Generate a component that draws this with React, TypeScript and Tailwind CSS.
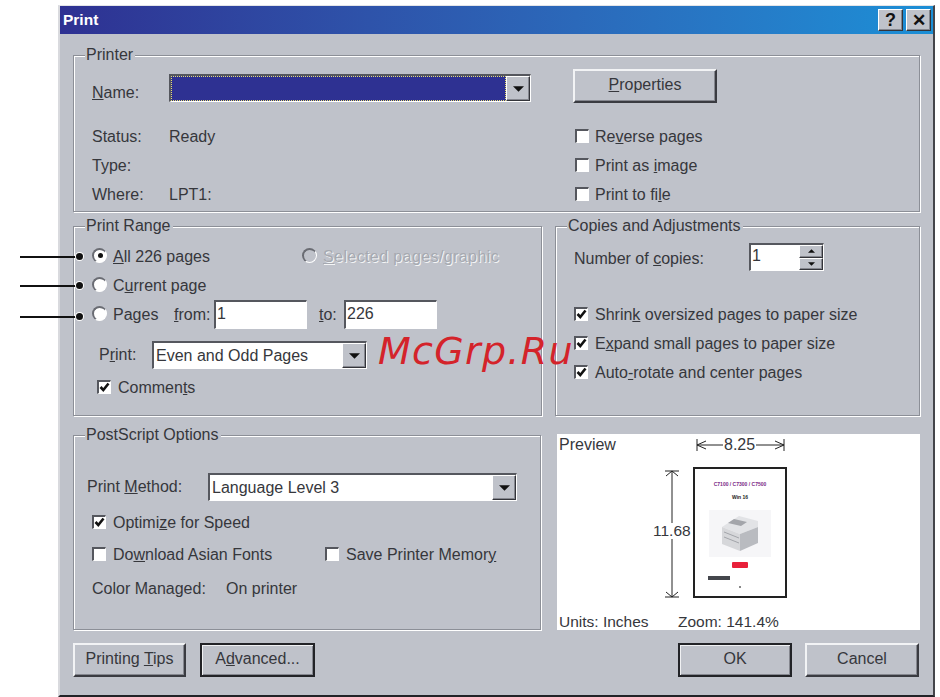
import React from "react";

const sunken = "border-t-2 border-l-2 border-t-[#55575e] border-l-[#55575e] border-r border-b border-r-white border-b-white";

function Group({ title, className, labelLeft = "left-[11px]", children }: { title: string; className: string; labelLeft?: string; children: React.ReactNode }) {
  return (
    <div className={`relative border border-[#8c8f97] shadow-[inset_1px_1px_0_#fff,1px_1px_0_#fff] ${className}`}>
      <span className={`absolute -top-[11px] ${labelLeft} bg-[#bfc2ca] pl-px pr-[2px] leading-[20px]`}>{title}</span>
      {children}
    </div>
  );
}

function Check({ checked = false, label, className = "" }: { checked?: boolean; label: React.ReactNode; className?: string }) {
  return (
    <div className={`flex items-center h-[29px] ${className}`}>
      <span className={`w-[14px] h-[14px] -mt-[2px] shrink-0 flex items-center justify-center bg-white ${sunken}`}>
        {checked && (
          <svg width="11" height="11" viewBox="0 0 11 11"><path d="M1.5 5l2.8 3L9.5 1.5" fill="none" stroke="#111" strokeWidth="2.6" /></svg>
        )}
      </span>
      <span className="ml-[7px] whitespace-nowrap">{label}</span>
    </div>
  );
}

function Radio({ on = false, disabled = false }: { on?: boolean; disabled?: boolean }) {
  return (
    <span className={`w-[15px] h-[15px] -mt-[3px] shrink-0 rounded-full flex items-center justify-center border-t-2 border-l-2 border-r border-b border-t-[#6a6c73] border-l-[#6a6c73] border-r-white border-b-white ${disabled ? "bg-[#bfc2ca]" : "bg-white"}`}>
      {on && <span className="w-[5px] h-[5px] rounded-full bg-[#111]" />}
    </span>
  );
}

function Arrow({ small = false, up = false }: { small?: boolean; up?: boolean }) {
  return (
    <svg width={small ? 7 : 11} height={small ? 4 : 6} viewBox="0 0 10 5" className={up ? "rotate-180" : ""}><path d="M0 0h10L5 5z" fill="#111" /></svg>
  );
}

function Combo({ className, text, selected = false }: { className: string; text?: string; selected?: boolean }) {
  return (
    <div className={`flex h-[28px] bg-white ${sunken} ${className}`}>
      <div className={`flex-1 min-w-0 flex items-center pl-[2px] ${selected ? "bg-[#2e3192] border border-dotted border-[#e8e070]" : ""}`}>{text}</div>
      <Btn3 className="w-[24px]"><Arrow /></Btn3>
    </div>
  );
}

function Btn3({ className, children }: { className: string; children: React.ReactNode }) {
  return (
    <div className={`flex items-center justify-center bg-[#bfc2ca] border border-t-white border-l-white border-r-[#33343a] border-b-[#33343a] shadow-[inset_-1px_-1px_0_#85878f] ${className}`}>{children}</div>
  );
}

function Button({ children, className, isDefault = false }: { children: React.ReactNode; className: string; isDefault?: boolean }) {
  const frame = isDefault
    ? "border-2 border-[#222327] shadow-[inset_1px_1px_0_#f0f1f3,inset_-1px_-1px_0_#85878f]"
    : "border-2 border-t-[#f2f3f5] border-l-[#f2f3f5] border-r-[#3a3b41] border-b-[#3a3b41] shadow-[inset_-1px_-1px_0_#85878f]";
  return <div className={`h-[34px] flex items-center justify-center pb-[2px] bg-[#bfc2ca] ${frame} ${className}`}>{children}</div>;
}

function Pointer({ className }: { className: string }) {
  return (
    <div className={`absolute left-[20px] flex items-center w-[63px] ${className}`}>
      <span className="h-[2px] flex-1 bg-[#111]" />
      <span className="w-[7px] h-[7px] rounded-full bg-[#111] shadow-[0_0_0_1px_#fff] -ml-px" />
    </div>
  );
}

function Field({ value, className }: { value: string; className: string }) {
  return <div className={`h-[29px] bg-white flex items-center pl-[1px] pb-[3px] ${sunken} ${className}`}>{value}</div>;
}

function PrinterThumb() {
  return (
    <svg width="62" height="47" viewBox="0 0 62 47" className="block blur-[0.4px]">
      <rect width="62" height="47" fill="#f6f6f8" />
      <path d="M13 17L30 6l19 5v6L31 24z" fill="#e2e3e6" />
      <path d="M13 17l18 7v17l-18-7z" fill="#d6d7da" />
      <path d="M31 24l18-7v16l-18 8z" fill="#b9bbc0" />
      <path d="M25 9l13 3-6 4-13-3z" fill="#a3a5aa" />
      <path d="M15 22l15 6M15 27l15 6" stroke="#a3a5aa" strokeWidth="1" />
    </svg>
  );
}

function PreviewPane() {
  return (
    <div className="w-[363px] h-[196px] bg-white flex flex-col pl-[2px]">
      <div className="flex items-center h-[21px]">
        <span className="w-[137px]">Preview</span>
        <div className="flex items-center mt-[1px]">
          <svg width="27" height="14" viewBox="0 0 27 14"><path d="M1 1v12M1 7h26M1 7l9-4M1 7l9 4" fill="none" stroke="#222" /></svg>
          <span className="px-[1px]">8.25</span>
          <svg width="29" height="14" viewBox="0 0 29 14"><path d="M28 1v12M0 7h28M28 7l-9-4M28 7l-9 4" fill="none" stroke="#222" /></svg>
        </div>
      </div>
      <div className="flex h-[147px] mt-[12px]">
        <div className="relative w-[134px] h-[132px] shrink-0">
          <svg width="16" height="128" viewBox="0 0 16 128" className="absolute left-[105px] top-[3px]">
            <path d="M1 1h14M8 1v126M1 127h14M8 1l-6 5M8 1l6 5M8 127l-6-5M8 127l6-5" fill="none" stroke="#222" />
          </svg>
          <span className="absolute left-[94px] top-[56px] bg-white text-[15.5px]">11.68</span>
        </div>
        <div className="w-[94px] h-[131px] border-[2px] border-[#222] flex flex-col items-center text-[#222] tracking-normal">
          <span className="mt-[12px] text-[5px] leading-[6px] font-bold text-[#7b2a86] whitespace-nowrap">C7100 / C7300 / C7500</span>
          <span className="mt-[7px] text-[5px] leading-[6px] font-bold">Win 16</span>
          <div className="mt-[10px]"><PrinterThumb /></div>
          <span className="mt-[5px] w-[16px] h-[6px] bg-[#e8203a] rounded-[1px]" />
          <div className="self-start ml-[13px] mt-[8px] w-[22px] h-[4px] bg-[#44464c]" />
          <span className="mt-[6px] w-[2px] h-[2px] bg-[#888]" />
        </div>
      </div>
      <div className="flex items-center h-[16px] text-[15.5px] tracking-normal">
        <span className="w-[119px]">Units: Inches</span>
        <span>Zoom: 141.4%</span>
      </div>
    </div>
  );
}

export default function App() {
  return (
    <div className="relative w-[940px] h-[697px] bg-white overflow-hidden text-[16px] tracking-normal leading-none text-[#36373c] font-['Liberation_Sans',Arial,sans-serif]">
      <div className="ml-[58px] mt-[5px] w-[877px] h-[692px] absolute bg-[#bfc2ca] border-l-2 border-t border-l-[#d9dade] border-t-[#e4e5e8] border-r-2 border-r-[#44454a] border-b-2 border-b-[#222327]">
        <div className="h-[28px] flex items-center justify-between pl-[3px] pr-[2px] bg-gradient-to-r from-[#2e3192] to-[#1b8fd6]">
          <span className="text-white font-bold text-[15.5px]">Print</span>
          <div className="flex gap-[3px]">
            <Btn3 className="w-[25px] h-[22px] font-bold text-[#111] text-[18px]">?</Btn3>
            <Btn3 className="w-[25px] h-[22px] font-bold text-[#111] text-[17px]">✕</Btn3>
          </div>
        </div>
        <div className="pl-[13px] pt-[21px]">
          <Group title="Printer" className="w-[847px] h-[157px] pl-[18px] pt-[13px] flex">
            <div className="w-[481px]">
              <div className="flex items-center mt-[5px] h-[28px]">
                <span className="w-[77px] pt-[10px]"><u>N</u>ame:</span>
                <Combo className="w-[362px]" selected />
              </div>
              <div className="mt-[20px]">
                {[["Status:", "Ready"], ["Type:", ""], ["Where:", "LPT1:"]].map(([a, b]) => (
                  <div key={a} className="flex items-center h-[29px]">
                    <span className="w-[77px]">{a}</span>
                    <span>{b}</span>
                  </div>
                ))}
              </div>
            </div>
            <div>
              <Button className="w-[144px]"><span><u>P</u>roperties</span></Button>
              <div className="mt-[19px] ml-[2px]">
                <Check label={<span className="-ml-[1px]">Re<u>v</u>erse pages</span>} />
                <Check label={<span className="-ml-[1px]">Print as <u>i</u>mage</span>} />
                <Check label={<span className="-ml-[1px]">Print to fi<u>l</u>e</span>} />
              </div>
            </div>
          </Group>
          <div className="flex gap-[13px] mt-[14px]">
            <Group title="Print Range" className="w-[469px] h-[190px] pl-[18px] pt-[15px] shrink-0">
              <div className="flex items-center h-[29px]">
                <Radio on />
                <span className="ml-[6px] w-[189px]"><u>A</u>ll 226 pages</span>
                <Radio disabled />
                <span className="ml-[6px] tracking-[0.4px] text-[#a6a9b0] [text-shadow:1px_1px_0_#f4f5f6]"><u>S</u>elected pages/graphic</span>
              </div>
              <div className="flex items-center h-[29px]">
                <Radio />
                <span className="ml-[6px]">C<u>u</u>rrent page</span>
              </div>
              <div className="flex items-center h-[29px]">
                <Radio />
                <span className="ml-[6px] w-[61px]">Pa<u>g</u>es</span>
                <span className="w-[40px]"><u>f</u>rom:</span>
                <Field value="1" className="w-[93px]" />
                <span className="ml-[12px] w-[25px]"><u>t</u>o:</span>
                <Field value="226" className="w-[93px]" />
              </div>
              <div className="flex items-center h-[28px] mt-[12px] pl-[7px]">
                <span className="w-[53px]">P<u>r</u>int:</span>
                <Combo className="w-[215px]" text="Even and Odd Pages" />
              </div>
              <Check className="ml-[5px] mt-[4px] h-[28px]" checked label={<>Commen<u>t</u>s</>} />
            </Group>
            <Group title="Copies and Adjustments" className="w-[365px] h-[190px] pl-[18px] pt-[16px]">
              <div className="flex items-center h-[28px]">
                <span className="w-[175px] pt-[4px]">Number of <u>c</u>opies:</span>
                <div className={`w-[75px] h-[28px] flex bg-white ${sunken}`}>
                  <span className="flex-1 flex items-center pl-[1px] pb-[3px]">1</span>
                  <div className="w-[24px] flex flex-col">
                    <Btn3 className="flex-1"><Arrow small up /></Btn3>
                    <Btn3 className="flex-1"><Arrow small /></Btn3>
                  </div>
                </div>
              </div>
              <div className="mt-[29px]">
                <Check checked label={<>Shrin<u>k</u> oversized pages to paper size</>} />
                <Check checked label={<>E<u>x</u>pand small pages to paper size</>} />
                <Check checked label={<>Auto<u>-</u>rotate and center pages</>} />
              </div>
            </Group>
          </div>
          <div className="flex mt-[18px]">
            <Group title="PostScript Options" className="w-[468px] h-[195px] pl-[13px] pt-[37px] shrink-0 self-end">
              <div className="flex items-center h-[28px]">
                <span className="w-[121px]">Print <u>M</u>ethod:</span>
                <Combo className="w-[309px]" text="Language Level 3" />
              </div>
              <Check className="ml-[5px] mt-[7px]" checked label={<>Optimi<u>z</u>e for Speed</>} />
              <div className="flex ml-[5px] mt-[3px]">
                <Check className="w-[233px]" label={<>Do<u>w</u>nload Asian Fonts</>} />
                <Check label={<>Save Printer Memor<u>y</u></>} />
              </div>
              <div className="flex ml-[5px] mt-[5px] h-[29px] items-center">
                <span className="w-[134px]">Color Managed:</span>
                <span>On printer</span>
              </div>
            </Group>
            <div className="ml-[16px]"><PreviewPane /></div>
          </div>
          <div className="flex items-center mt-[13px]">
            <Button className="w-[113px]"><span>Printing <u>T</u>ips</span></Button>
            <Button className="w-[115px] ml-[14px]" isDefault><span>A<u>d</u>vanced...</span></Button>
            <Button className="w-[114px] ml-[363px]" isDefault><span>OK</span></Button>
            <Button className="w-[114px] ml-[13px]"><span>Cancel</span></Button>
          </div>
        </div>
      </div>
      <Pointer className="top-[253px]" />
      <Pointer className="top-[282px]" />
      <Pointer className="top-[313px]" />
      <span className="absolute left-[378px] top-[329px] text-[38px] leading-[44px] italic tracking-[1.3px] text-[#d4232a] font-['DejaVu_Sans',sans-serif]">McGrp.Ru</span>
    </div>
  );
}
